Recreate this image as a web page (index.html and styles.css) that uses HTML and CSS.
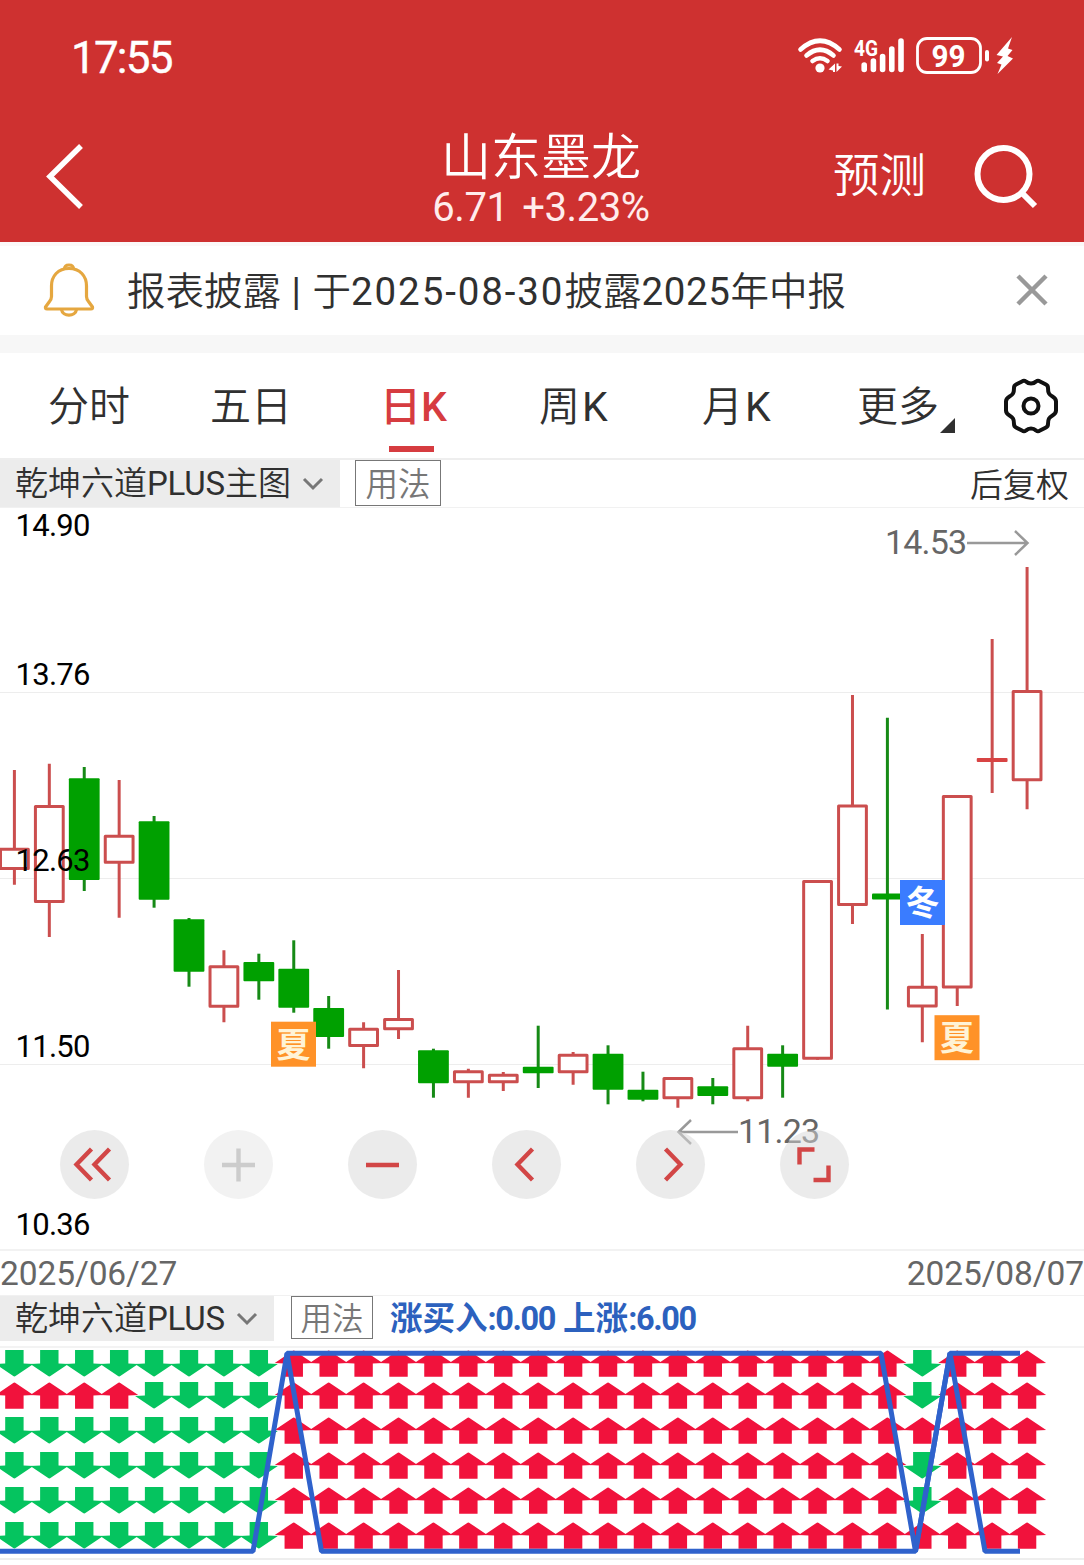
FILE: index.html
```html
<!DOCTYPE html>
<html lang="zh-CN">
<head>
<meta charset="utf-8">
<title>山东墨龙</title>
<link rel="stylesheet" href="styles.css">
</head>
<body>
<header class="header">
  <div class="status">
    <span class="clock">17:55</span>
    <svg class="status-icons" width="220" height="44" viewBox="796 34 220 44">
      <g fill="none" stroke="#fff" stroke-width="4.6" stroke-linecap="round">
        <path d="M800.500 49.500Q820 32 839.500 49.500"/>
        <path d="M806.500 55.500Q820 44 833.500 55.500"/>
        <path d="M812.500 61Q820 55.500 827.500 61"/>
      </g>
      <circle cx="820" cy="68" r="4.600" fill="#fff"/>
      <path fill="#fff" d="M828.500 69.500 835 63.500V72H833V70.500ZM836.500 63.500H838.500V66L842 66.500 836.500 72Z"/>
      <text class="net" x="854" y="55.500" textLength="24" lengthAdjust="spacingAndGlyphs">4G</text>
      <g stroke="#fff" stroke-width="5.600" stroke-linecap="round">
        <path d="M864.200 65V69.500M873.400 61V69.500M882.600 56.500V69.500M891.800 49V69.500M901 41V69.500"/>
      </g>
      <rect x="917.500" y="38.500" width="63" height="34" rx="9.500" fill="none" stroke="#fff" stroke-width="2.800"/>
      <text class="level" x="931.500" y="66.500" textLength="34" lengthAdjust="spacingAndGlyphs">99</text>
      <rect x="985" y="50" width="4" height="11.500" rx="2" fill="#fff"/>
      <path fill="#fff" d="M1012 37 996.500 55 1003 56.500 997 63 1001.500 64.500 997.500 74 1013 58.500 1007.500 56 1012.500 50 1008 48.500Z"/>
    </svg>
  </div>
  <div class="titlebar">
    <svg class="back" width="40" height="66" viewBox="0 0 40 66"><path d="M37 3 6 33.500 37 64" fill="none" stroke="#fff" stroke-width="5.500"/></svg>
    <div class="stock">
      <div class="name">山东墨龙</div>
      <div class="quote">6.71 +3.23%</div>
    </div>
    <div class="actions">
      <span class="predict">预测</span>
      <svg width="66" height="66" viewBox="972 142 66 66" fill="none" stroke="#fff" stroke-width="6"><circle cx="1003.500" cy="173" r="26"/><path d="M1021 191 1035 205"/></svg>
    </div>
  </div>
</header>

<section class="notice">
  <svg class="bell" width="54" height="56" viewBox="42 262 54 56" fill="none" stroke="#e5a740" stroke-width="3.200" stroke-linejoin="round">
    <path d="M64.500 269Q64.500 265 69 265T73.500 269"/>
    <path d="M69 268.500C58 268.500 51.500 276 51.500 286V296.500Q51.500 299 49.500 301.500L45.500 307Q45 309 47 309H91Q93 309 92.500 307L88.500 301.500Q86.500 299 86.500 296.500V286C86.500 276 80 268.500 69 268.500Z"/>
    <path d="M61.500 309.500C62.500 317 75.500 317 76.500 309.500"/>
  </svg>
  <span class="notice-text">报表披露<i> | </i>于<b class="wide">2025-08-30</b>披露<b>2025</b>年中报</span>
  <svg class="close" width="32" height="32" viewBox="0 0 32 32"><path d="M2 2 30 30M30 2 2 30" stroke="#999" stroke-width="4.500"/></svg>
</section>

<nav class="tabs">
  <span class="tab">分时</span>
  <span class="tab">五日</span>
  <span class="tab active">日K</span>
  <span class="tab">周<b>K</b></span>
  <span class="tab">月<b>K</b></span>
  <span class="tab more">更多</span>
  <svg class="gear" width="58" height="58" viewBox="-29 -29 58 58" fill="none" stroke="#111" stroke-width="4" stroke-linejoin="round">
    <path d="M-9-24.500Q-7-26-5-24.500Q-3-22.500 0-22.500T5-24.500Q7-26 9-24.500L15-21.500Q17-20.500 17-18C17-13 18-11.500 21.500-9.500Q25-7.500 25-4.500V4.500Q25 7.500 21.500 9.500C18 11.500 17 13 17 18Q17 20.500 15 21.500L9 24.500Q7 26 5 24.500Q3 22.500 0 22.500T-5 24.500Q-7 26-9 24.500L-15 21.500Q-17 20.500-17 18C-17 13-18 11.500-21.500 9.500Q-25 7.500-25 4.500V-4.500Q-25-7.500-21.500-9.500C-18-11.500-17-13-17-18Q-17-20.500-15-21.500Z"/>
    <circle r="7.500"/>
  </svg>
</nav>

<div class="toolbar main-toolbar">
  <div class="selector"><span>乾坤六道<b>PLUS</b>主图</span><svg width="22" height="14" viewBox="0 0 22 14"><path d="M2 2 11 11 20 2" fill="none" stroke="#777" stroke-width="3"/></svg></div>
  <div class="usage">用法</div>
  <div class="adjust">后复权</div>
</div>

<main class="chart">
  <svg id="candles" width="1084" height="742" viewBox="0 508 1084 742"></svg>
  <div class="controls">
    <button class="ctl"><svg viewBox="-34.500 -34.500 69 69"><path d="M-3-15.500-18 0-3 15.500M15-15.500 0 0 15 15.500"/></svg></button>
    <button class="ctl disabled"><svg viewBox="-34.500 -34.500 69 69"><path d="M-16.500 .5H16.500M0-16V17"/></svg></button>
    <button class="ctl"><svg viewBox="-34.500 -34.500 69 69"><path d="M-16.500 .5H16.500"/></svg></button>
    <button class="ctl"><svg viewBox="-34.500 -34.500 69 69"><path d="M6-15.500-9 0 6 15.500"/></svg></button>
    <button class="ctl"><svg viewBox="-34.500 -34.500 69 69"><path d="M-5-15.500 10 0-5 15.500"/></svg></button>
    <button class="ctl"><svg viewBox="-34.500 -34.500 69 69"><path d="M-15 0V-15H0M-1 15.500H14V1"/></svg></button>
  </div>
</main>

<div class="dates"><span>2025/06/27</span><span>2025/08/07</span></div>

<div class="toolbar sub-toolbar">
  <div class="selector"><span>乾坤六道<b>PLUS</b></span><svg width="22" height="14" viewBox="0 0 22 14"><path d="M2 2 11 11 20 2" fill="none" stroke="#777" stroke-width="3"/></svg></div>
  <div class="usage">用法</div>
  <div class="values">涨买入<b>:0.00</b> 上涨<b>:6.00</b></div>
</div>

<section class="indicator">
  <svg id="signals" width="1084" height="209" viewBox="0 1348 1084 209"></svg>
</section>
<script src="chart.js"></script>
</body>
</html>
```
FILE: styles.css
```css
* { box-sizing: border-box; }
body {
  margin: 0;
  width: 1084px;
  height: 1565px;
  overflow: hidden;
  background: #fff;
  color: #303030;
  font-family: Roboto, "Noto Sans CJK SC", sans-serif;
  font-weight: 350;
}
svg { display: block; flex: none; overflow: visible; }
span, div { white-space: nowrap; }
b { font-weight: 400; }
i { font-style: normal; font-weight: 400; }

.header { height: 242px; background: #ce3130; color: #fff; }
.status { height: 110px; display: flex; justify-content: space-between; padding: 34px 68px 0 71px; }
.clock { font-size: 44px; line-height: 48px; font-weight: 400; letter-spacing: -1.8px; -webkit-text-stroke: .4px #fff; }
.net { font-size: 22px; font-weight: 700; fill: #fff; }
.level { font-size: 31px; font-weight: 700; fill: #fff; }
.titlebar { height: 132px; display: grid; grid-template-columns: 1fr 240px 1fr; align-items: center; padding: 0 46px 0 44px; }
.stock { text-align: center; padding-top: 11px; }
.name { font-size: 50px; line-height: 52px; }
.quote { font-size: 40px; line-height: 48px; color: #ffecec; letter-spacing: -.4px; word-spacing: 4px; font-weight: 400; }
.actions { display: flex; justify-content: flex-end; align-items: center; gap: 46px; }
.predict { font-size: 46.5px; line-height: 60px; }

.notice { height: 111px; display: flex; align-items: center; padding: 0 36px 0 42px; border-top: 4px solid #fcf8f8; border-bottom: 18px solid #f7f7f7; }
.notice-text { margin-left: 31px; font-size: 38.5px; line-height: 50px; padding-top: 2px; }
.notice-text b { letter-spacing: .6px; }
.notice-text .wide { letter-spacing: 1.9px; }
.notice-text i { letter-spacing: 1px; }
.bell, .close { position: relative; top: -1px; }
.close { margin-left: auto; }

.tabs { height: 107px; display: grid; grid-template-columns: 162px 171px 158px 163px 155px 145px 1fr; align-items: center; padding: 0 0 0 48px; border-bottom: 2px solid #eee; font-size: 41px; }
.tab { line-height: 60px; position: relative; top: 1px; }
.tab b { margin-left: 2px; }
.active { color: #d63c40; font-weight: 500; left: -1px; }
.active::after { content: ""; position: absolute; left: 9px; bottom: -15px; width: 45px; height: 6px; background: #d63c40; }
.more::after { content: ""; position: absolute; left: 83px; bottom: 4px; border-left: 15px solid transparent; border-bottom: 15px solid #303030; }

.toolbar { display: flex; align-items: flex-start; border-bottom: 1px solid #f1f1f1; font-size: 33px; }
.selector { display: flex; align-items: center; justify-content: space-between; background: #ececec; padding: 0 16px 0 15px; }
.selector span { padding-bottom: 5px; }
.selector b { letter-spacing: -.2px; }
.usage { border: 1px solid #777; color: #777; text-align: center; font-size: 32.5px; }
.main-toolbar { height: 48px; }
.main-toolbar .selector { width: 340px; height: 47px; }
.main-toolbar .usage { width: 86px; height: 46px; line-height: 48px; margin-left: 15px; }
.adjust { margin: 0 15px 0 auto; line-height: 51px; height: 46px; }

.chart { position: relative; height: 743px; border-bottom: 2px solid #f2f2f2; }
.controls { position: absolute; left: 60px; top: 622px; display: flex; gap: 75px; }
.ctl { width: 69px; height: 69px; padding: 0; border: 0; border-radius: 50%; background: rgba(215, 215, 215, .5); }
.ctl path { fill: none; stroke: #d24646; stroke-width: 4.4; }
.disabled { background: rgba(230, 230, 230, .5); }
.disabled path { stroke: #ccc; }
text { font-family: Roboto, "Noto Sans CJK SC", sans-serif; font-weight: 400; }
.price { font-size: 31px; fill: #000; }
.extreme { font-size: 34px; fill: #666; }
.badge { font-size: 34px; font-weight: 700; }

.dates { height: 44px; display: flex; justify-content: space-between; color: #666; font-size: 33.5px; line-height: 45px; letter-spacing: -.1px; font-weight: 400; }
.sub-toolbar { height: 53px; border-top: 1px solid #f1f1f1; border-bottom: 2px solid #f3f3f3; }
.sub-toolbar .selector { width: 274px; height: 45px; }
.sub-toolbar .usage { width: 82px; height: 43px; line-height: 45px; margin-left: 17px; font-size: 31.5px; }
.values { margin-left: 17px; line-height: 47px; font-size: 32.5px; font-weight: 700; color: #2c61be; }
.values b { letter-spacing: -1.4px; font-weight: 700; }
.indicator { height: 212px; border-bottom: 2px solid #eee; }
```
FILE: chart.js
```js
const STEP = 34.92, FIRST = 14.4;

// [direction, high, body top, body bottom, low] in chart pixels
const candles = [
  ['u',770,847.7,870,884.7],['u',763.7,805,903,937],['d',767,778.3,880,891],['u',780,834.7,863.7,917.7],
  ['d',816,821.3,899.7,907.7],['d',918,919.3,971.7,986.7],['u',950.3,965.3,1007.7,1022.3],['d',953.7,962,981.3,999.7],
  ['d',940.3,968.7,1007.7,1012.7],['d',996,1008,1037,1048.7],['u',1022.3,1027.7,1047,1068.3],['u',970,1018,1030.3,1039],
  ['d',1048.7,1050.3,1083.3,1097.7],['u',1068.7,1070.3,1083.3,1097.7],['u',1072,1073.7,1083.3,1091],['d',1025.7,1066.7,1073.3,1088],
  ['u',1052,1053.7,1073.3,1084.7],['d',1045.3,1053.7,1089.7,1104.3],['d',1071.7,1089.7,1099.7,1101.3],['u',1077,1077,1099.3,1107.7],
  ['d',1078,1086.3,1096,1104.3],['u',1025.7,1047.3,1099.3,1101.3],['d',1045.3,1053.7,1066.7,1097.7],['u',880,880,1059.8,1059.8],
  ['u',695,804.6,906,924],['d',717.7,893.5,899.5,1009.4],['u',934,985.8,1007.4,1042.2],['u',795.1,795.1,988.6,1006],
  ['u',639,758,762,793],['u',567,690,781.2,809.3]
];

let out = '';
for (const y of [692.5, 878.5, 1064.5]) out += `<path d="M0 ${y}H1084" stroke="#ededed"/>`;
candles.forEach(([dir, high, top, bottom, low], i) => {
  const x = FIRST + i * STEP;
  if (dir === 'd') {
    out += `<path d="M${x} ${high}V${low}" stroke="#168a16" stroke-width="3"/>`;
    out += `<rect x="${x - 15.4}" y="${top}" width="30.800" height="${bottom - top}" rx="1" fill="#00a000"/>`;
  } else {
    out += `<path d="M${x} ${high}V${top + 1}M${x} ${bottom - 1}V${low}" stroke="#cb4e4e" stroke-width="3"/>`;
    if (bottom - top < 5) out += `<rect x="${x - 15.4}" y="${top}" width="30.800" height="4" rx="1" fill="#d84444"/>`;
    else out += `<rect x="${x - 13.9}" y="${top + 1.5}" width="27.800" height="${bottom - top - 3}" fill="#fff" stroke="#cb4e4e" stroke-width="3" stroke-linejoin="round"/>`;
  }
});
for (const [x, y, label, bg, fg] of [
  [271, 1021.7, '夏', '#ff9228', '#fff3d6'], [934.5, 1015.2, '夏', '#ff9228', '#fff3d6'], [900, 880, '冬', '#3a7cff', '#fff']
]) {
  out += `<rect x="${x}" y="${y}" width="45" height="45" fill="${bg}"/>`;
  out += `<text class="badge" x="${x + 22.5}" y="${y + 35}" text-anchor="middle" fill="${fg}">${label}</text>`;
}
for (const [label, y] of [['14.90', 536], ['13.76', 685], ['12.63', 871], ['11.50', 1057], ['10.36', 1235]])
  out += `<text class="price" x="15.500" y="${y}" textLength="75">${label}</text>`;
out += `<text class="extreme" x="885" y="554" textLength="82">14.53</text>`;
out += `<text class="extreme" x="738" y="1143" textLength="82">11.23</text>`;
out += `<path d="M967 543H1027M1015 531 1027.500 543 1015 555M738 1132H679M691 1120 678.500 1132 691 1144" fill="none" stroke="#999" stroke-width="2.500"/>`;
document.getElementById('candles').innerHTML = out;

// Signal grid: one arrow per candle and row
const rows = [1350, 1382, 1417, 1452, 1487, 1522];
let grid = '';
for (let i = 0; i < 30; i++) {
  rows.forEach((y, r) => {
    const x = FIRST + i * STEP;
    const green = (i < 8 && !(r === 1 && i < 4)) || (i === 26 && r !== 2 && r !== 5);
    grid += green
      ? `<path transform="translate(${x} ${y})" fill="#05c45f" d="M-9.200 0H9.200V13.500L19 14 1.500 25.800Q0 27-1.500 25.800L-19 14-9.200 13.500Z"/>`
      : `<path transform="translate(${x} ${y})" fill="#f1123c" d="M-9.200 26.800H9.200V13.500L19 13 1.500 1.200Q0 0-1.500 1.200L-19 13-9.200 13.500Z"/>`;
  });
}
grid += `<g fill="none" stroke="#2f62cc" stroke-width="5" stroke-linejoin="bevel">
  <path d="M0 1551.300H253L287 1353.300H881L915.500 1551.300 950 1353.300H1020"/>
  <path d="M287 1353.300 321.500 1551.300H915.500L950 1353.300 985 1551.300H1020"/></g>`;
document.getElementById('signals').innerHTML = grid;
```
